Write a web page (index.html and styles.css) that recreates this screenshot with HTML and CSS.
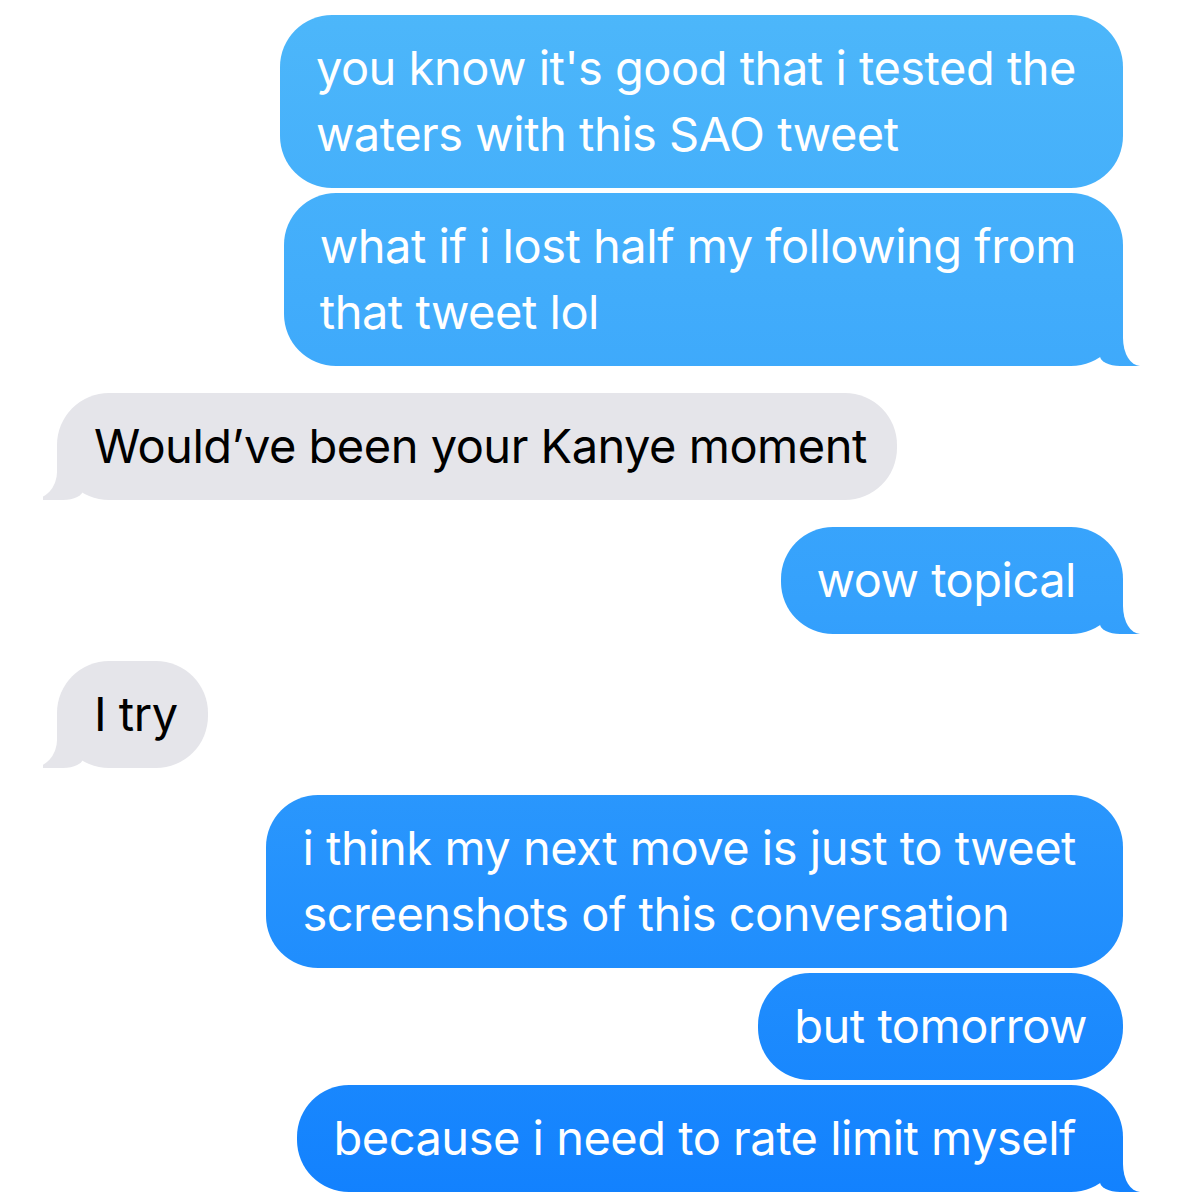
FILE: index.html
```html
<!DOCTYPE html>
<html lang="en">
<head>
  <meta charset="UTF-8" />
  <meta name="viewport" content="width=device-width, initial-scale=1.0" />
  <title>Messages</title>
  <link rel="stylesheet" href="styles.css">
</head>
<body>
  <div class="thread">
    <div class="group sent">
      <div class="bubble">you know it's good that i tested the<br>waters with this SAO tweet</div>
      <div class="bubble tail">what if i lost half my following from<br>that tweet lol</div>
    </div>

    <div class="group received">
      <div class="bubble tail">Would’ve been your Kanye moment</div>
    </div>

    <div class="group sent">
      <div class="bubble tail">wow topical</div>
    </div>

    <div class="group received">
      <div class="bubble tail">I try</div>
    </div>

    <div class="group sent">
      <div class="bubble">i think my next move is just to tweet<br>screenshots of this conversation</div>
      <div class="bubble even">but tomorrow</div>
      <div class="bubble tail">because i need to rate limit myself</div>
    </div>
  </div>
</body>
</html>
```

FILE: styles.css
```css
body {
  margin: 0;
  background: #fff;
  font-family: Inter, "Noto Sans", sans-serif;
}

.thread {
  display: flex;
  flex-direction: column;
  gap: 27px;
  padding: 15px 58px 0 57px;
}

.group {
  display: flex;
  flex-direction: column;
  gap: 5px;
}

.group.sent {
  align-items: flex-end;
}

.group.received {
  align-items: flex-start;
}

.bubble {
  position: relative;
  font-size: 47px;
  letter-spacing: -0.5px;
  line-height: 66px;
  border-radius: 52px;
  white-space: nowrap;
}

/* sent: blue gradient tied to the screen, like iOS */
.sent .bubble {
  padding: 20px 47px 21px 36px;
  color: #fff;
  background: linear-gradient(to bottom, #4db7fa 0%, #35a1fc 50%, #1281fe 100%) fixed;
}

.sent .bubble.even {
  padding-right: 36px;
}

.received .bubble {
  padding: 20px 30px 21px 37px;
  color: #000;
  background: #e5e5ea;
}

.bubble.tail::before,
.bubble.tail::after {
  content: "";
  position: absolute;
  bottom: 0;
}

.sent .bubble.tail::before {
  right: -17px;
  width: 40px;
  height: 52px;
  background: linear-gradient(to bottom, #4db7fa 0%, #35a1fc 50%, #1281fe 100%) fixed;
  border-bottom-left-radius: 20px 10px;
}

.sent .bubble.tail::after {
  right: -40px;
  width: 40px;
  height: 60px;
  background: #fff;
  border-bottom-left-radius: 17px 28px;
}

.received .bubble.tail::before {
  left: -14px;
  width: 40px;
  height: 52px;
  background: #e5e5ea;
  border-bottom-right-radius: 20px 10px;
}

.received .bubble.tail::after {
  left: -40px;
  width: 40px;
  height: 60px;
  background: #fff;
  border-bottom-right-radius: 26px 28px;
}
```
